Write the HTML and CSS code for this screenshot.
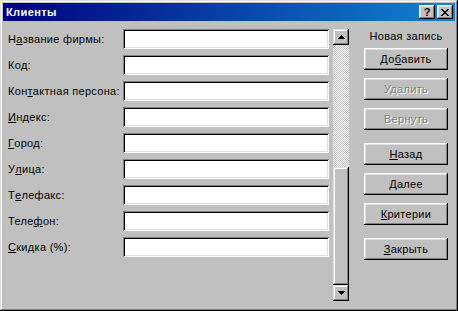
FILE: index.html
```html
<!DOCTYPE html>
<html lang="ru">
<head>
	<meta charset="UTF-8">
	<title>Клиенты</title>
	<link rel="stylesheet" href="styles.css">
</head>
<body>
	<div class="window">
		<div class="titlebar">
			<span class="title">Клиенты</span>
			<div class="title-buttons">
				<div class="tbtn">?</div>
				<div class="tbtn">
					<svg width="8" height="7" viewBox="0 0 8 7"><path d="M0 0h2v1h1v1h2v-1h1v-1h2v1h-1v1h-1v1h-1v1h1v1h1v1h1v1h-2v-1h-1v-1h-2v1h-1v1h-2v-1h1v-1h1v-1h1v-1h-1v-1h-1v-1h-1z" fill="#000"/></svg>
				</div>
			</div>
		</div>

		<div class="content">
			<div class="fields">
				<label>Н<u>а</u>звание фирмы:</label><div class="field"></div>
				<label>Код:</label><div class="field"></div>
				<label>Кон<u>т</u>актная персона:</label><div class="field"></div>
				<label><u>И</u>ндекс:</label><div class="field"></div>
				<label><u>Г</u>ород:</label><div class="field"></div>
				<label>У<u>л</u>ица:</label><div class="field"></div>
				<label>Т<u>е</u>лефакс:</label><div class="field"></div>
				<label>Теле<u>ф</u>он:</label><div class="field"></div>
				<label><u>С</u>кидка (%):</label><div class="field"></div>
			</div>

			<div class="scrollbar">
				<div class="sb-btn">
					<svg width="7" height="4" viewBox="0 0 7 4"><path d="M3 0h1v1h1v1h1v1h1v1h-7v-1h1v-1h1v-1h1z" fill="#000"/></svg>
				</div>
				<div class="sb-track"></div>
				<div class="sb-thumb"></div>
				<div class="sb-btn">
					<svg width="7" height="4" viewBox="0 0 7 4"><path d="M0 0h7v1h-1v1h-1v1h-1v1h-1v-1h-1v-1h-1v-1h-1z" fill="#000"/></svg>
				</div>
			</div>

			<div class="panel">
				<div class="record">Новая запись</div>
				<div class="group">
					<div class="btn">До<u>б</u>авить</div>
					<div class="btn disabled">Удалить</div>
					<div class="btn disabled">Вернуть</div>
				</div>
				<div class="group">
					<div class="btn"><u>Н</u>азад</div>
					<div class="btn"><u>Д</u>алее</div>
					<div class="btn"><u>К</u>ритерии</div>
				</div>
				<div class="group">
					<div class="btn"><u>З</u>акрыть</div>
				</div>
			</div>
		</div>
	</div>
</body>
</html>
```

FILE: styles.css
```css
html, body {
	padding: 0;
	margin: 0;
}

body {
	font-family: "Liberation Sans", Arial, sans-serif;
	font-size: 11px;
	letter-spacing: 0.3px;
	color: #000;
	background: #c0c0c0;
}

.window {
	box-sizing: border-box;
	width: 458px;
	height: 311px;
	padding: 3px;
	background: #c0c0c0;
	box-shadow: inset -1px -1px #000, inset 1px 1px #dfdfdf, inset -2px -2px #808080, inset 2px 2px #fff;
	display: flex;
	flex-direction: column;
}

/*/ Title bar /*/

.titlebar {
	height: 18px;
	display: flex;
	align-items: center;
	justify-content: space-between;
	padding: 0 2px 0 3px;
	background: linear-gradient(to right, #000080, #1084d0);
}

.title {
	color: #fff;
	font-weight: bold;
	font-size: 11px;
	letter-spacing: 0.4px;
}

.title-buttons {
	display: flex;
	gap: 2px;
}

.tbtn {
	box-sizing: border-box;
	width: 16px;
	height: 14px;
	display: flex;
	align-items: center;
	justify-content: center;
	background: #c0c0c0;
	font-weight: bold;
	font-size: 11px;
	letter-spacing: 0;
	box-shadow: inset -1px -1px #000, inset 1px 1px #fff, inset -2px -2px #808080, inset 2px 2px #dfdfdf;
}

/*/ Content /*/

.content {
	flex: 1;
	display: flex;
	align-items: flex-start;
}

.fields {
	display: grid;
	grid-template-columns: 115px 206px;
	grid-auto-rows: 20px;
	row-gap: 6px;
	padding: 8px 0 0 5px;
}

.fields label {
	display: flex;
	align-items: center;
	white-space: nowrap;
}

.field {
	background: #fff;
	box-shadow: inset 1px 1px #808080, inset -1px -1px #fff, inset 2px 2px #000, inset -2px -2px #dfdfdf;
}

/*/ Scrollbar /*/

.scrollbar {
	width: 16px;
	height: 272px;
	margin: 8px 0 0 4px;
	display: flex;
	flex-direction: column;
}

.sb-btn, .sb-thumb {
	background: #c0c0c0;
	box-shadow: inset -1px -1px #000, inset 1px 1px #dfdfdf, inset -2px -2px #808080, inset 2px 2px #fff;
}

.sb-btn {
	height: 16px;
	display: flex;
	align-items: center;
	justify-content: center;
}

.sb-track {
	height: 122px;
	background: repeating-conic-gradient(#fff 0 25%, #c0c0c0 0 50%) 0 0 / 2px 2px;
}

.sb-thumb {
	flex: 1;
}

/*/ Right panel /*/

.panel {
	display: flex;
	flex-direction: column;
	align-items: center;
	width: 84px;
	margin: 8px 0 0 15px;
}

.record {
	line-height: 14px;
	white-space: nowrap;
	margin-bottom: 5px;
}

.group {
	display: flex;
	flex-direction: column;
	gap: 8px;
	margin-bottom: 13px;
}

.btn {
	box-sizing: border-box;
	width: 84px;
	height: 22px;
	display: flex;
	align-items: center;
	justify-content: center;
	background: #c0c0c0;
	box-shadow: inset -1px -1px #000, inset 1px 1px #fff, inset -2px -2px #808080, inset 2px 2px #dfdfdf;
}

.btn.disabled {
	color: #808080;
	text-shadow: 1px 1px #fff;
}
```
